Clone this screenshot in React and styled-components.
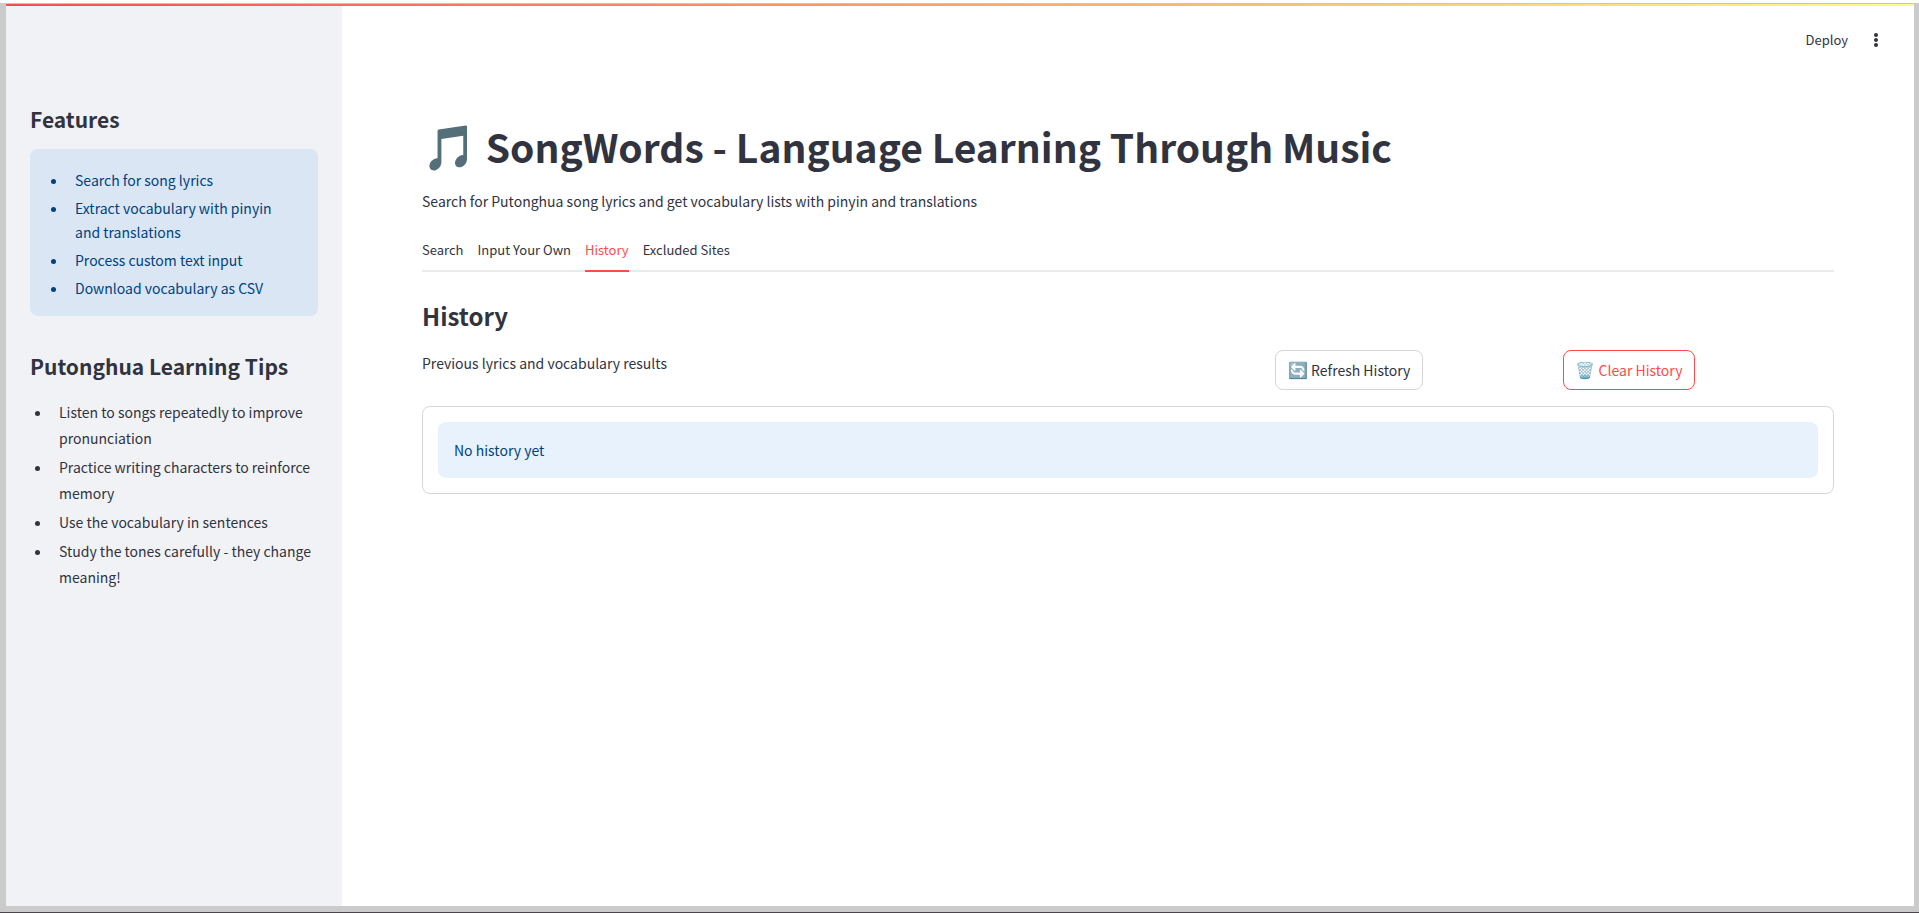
import React, { useState } from "react";
import styled, { createGlobalStyle } from "styled-components";

const GlobalStyle = createGlobalStyle`
  *, *::before, *::after { box-sizing: border-box; }
  body {
    margin: 0;
    background: #fff;
    color: #31333f;
    font-family: "Noto Sans CJK SC", "Noto Color Emoji", sans-serif;
    font-size: 14px;
    line-height: 26px;
  }
  h1, h2, p, ul { margin: 0; }
  button { font-family: inherit; }
`;

const Frame = styled.div`
  min-height: 100vh;
  display: flex;
  flex-direction: column;
  padding: 3px 5px 6px 6px;
  background: linear-gradient(#fff, #fff) top / 100% 3px no-repeat #cbcbcb;
  border-bottom: 1px solid #4a444b;
`;

const Decoration = styled.div`
  height: 3px;
  border-top: 1px solid #c4c4c4;
  background: linear-gradient(90deg, #ff4b4b, #fffd80);
`;

const Shell = styled.div`
  flex: 1;
  display: flex;
  background: #fff;
`;

const Sidebar = styled.aside`
  flex: none;
  width: 336px;
  padding: 99px 24px 24px;
  background: #f0f2f6;
`;

const SideHeading = styled.h2`
  font-size: 21px;
  font-weight: 600;
  line-height: 28px;
  margin-bottom: 16px;
`;

const FeatureBox = styled.div`
  padding: 16px;
  margin-bottom: 36px;
  border-radius: 8px;
  background: #dae6f4;
  color: #004280;
`;

const List = styled.ul`
  display: flex;
  flex-direction: column;
  gap: ${(p) => p.$gap}px;
  padding: 3px 0 0 22px;
  line-height: ${(p) => p.$line}px;

  li {
    padding-left: 7px;
    padding-right: ${(p) => p.$inset || 0}px;
  }
`;

const Main = styled.main`
  flex: 1;
  min-width: 0;
`;

const Toolbar = styled.header`
  height: 68px;
  display: flex;
  align-items: center;
  justify-content: flex-end;
  gap: 18px;
  padding-right: 28px;
`;

const PlainButton = styled.button`
  display: flex;
  align-items: center;
  padding: 0;
  border: 0;
  background: none;
  color: #31333f;
  font-size: 13px;
  line-height: 20px;
  cursor: pointer;
`;

const Content = styled.div`
  padding: 46px 80px;
`;

const Emoji = styled.span`
  font-size: ${(p) => p.$size}px;
  line-height: 1;
`;

const Title = styled.h1`
  font-size: 39px;
  font-weight: 700;
  line-height: 52px;
  margin-bottom: 16px;
`;

const Tabs = styled.div`
  display: flex;
  gap: 14px;
  margin: 16px 0 28px;
  border-bottom: 2px solid #eaeaeb;
`;

const Tab = styled.button`
  height: 42px;
  padding: 0 0 2px;
  margin-bottom: -2px;
  border: 0;
  border-bottom: 2px solid ${(p) => (p.$active ? "#ff4b4b" : "transparent")};
  background: none;
  color: ${(p) => (p.$active ? "#ff4b4b" : "#31333f")};
  font-size: 13px;
  cursor: pointer;
`;

const SectionHeading = styled.h2`
  font-size: 24px;
  font-weight: 600;
  line-height: 32px;
  margin-bottom: 18px;
`;

const ActionRow = styled.div`
  display: grid;
  grid-template-columns: 37fr 12fr 12fr;
  gap: 16px;
  align-items: start;
  margin-bottom: 16px;
`;

const ActionButton = styled.button`
  justify-self: start;
  height: 40px;
  padding: 0 12px;
  border: 1px solid ${(p) => (p.$danger ? "#ff4b4b" : "#d6d6d9")};
  border-radius: 8px;
  background: #fff;
  color: ${(p) => (p.$danger ? "#ff4b4b" : "#31333f")};
  font-size: 14px;
  cursor: pointer;
`;

const ResultPanel = styled.section`
  padding: 15px;
  border: 1px solid #d6d6d9;
  border-radius: 8px;
`;

const Notice = styled.p`
  padding: 16px;
  border-radius: 8px;
  background: #e8f2fc;
  color: #004280;
  line-height: 24px;
`;

const features = [
  "Search for song lyrics",
  "Extract vocabulary with pinyin and translations",
  "Process custom text input",
  "Download vocabulary as CSV",
];

const tips = [
  "Listen to songs repeatedly to improve pronunciation",
  "Practice writing characters to reinforce memory",
  "Use the vocabulary in sentences",
  "Study the tones carefully - they change meaning!",
];

const tabs = ["Search", "Input Your Own", "History", "Excluded Sites"];

export default function App() {
  const [active, setActive] = useState("History");
  return (
    <Frame>
      <GlobalStyle />
      <Decoration />
      <Shell>
        <Sidebar>
          <SideHeading>Features</SideHeading>
          <FeatureBox>
            <List $line={24} $gap={4} $inset={8}>
              {features.map((t) => <li key={t}>{t}</li>)}
            </List>
          </FeatureBox>
          <SideHeading>Putonghua Learning Tips</SideHeading>
          <List $line={26} $gap={3}>
            {tips.map((t) => <li key={t}>{t}</li>)}
          </List>
        </Sidebar>
        <Main>
          <Toolbar>
            <PlainButton>Deploy</PlainButton>
            <PlainButton aria-label="Main menu">
              <svg width="20" height="20" viewBox="0 0 20 20" fill="currentColor" aria-hidden="true">
                <circle cx="10" cy="5" r="2" />
                <circle cx="10" cy="10" r="2" />
                <circle cx="10" cy="15" r="2" />
              </svg>
            </PlainButton>
          </Toolbar>
          <Content>
            <Title><Emoji $size={44}>🎵</Emoji> SongWords - Language Learning Through Music</Title>
            <p>Search for Putonghua song lyrics and get vocabulary lists with pinyin and translations</p>
            <Tabs role="tablist">
              {tabs.map((t) => (
                <Tab key={t} role="tab" aria-selected={t === active} $active={t === active} onClick={() => setActive(t)}>
                  {t}
                </Tab>
              ))}
            </Tabs>
            <SectionHeading>History</SectionHeading>
            <ActionRow>
              <p>Previous lyrics and vocabulary results</p>
              <ActionButton><Emoji $size={16}>🔄</Emoji> Refresh History</ActionButton>
              <ActionButton $danger><Emoji $size={16}>🗑️</Emoji> Clear History</ActionButton>
            </ActionRow>
            <ResultPanel>
              <Notice>No history yet</Notice>
            </ResultPanel>
          </Content>
        </Main>
      </Shell>
    </Frame>
  );
}
